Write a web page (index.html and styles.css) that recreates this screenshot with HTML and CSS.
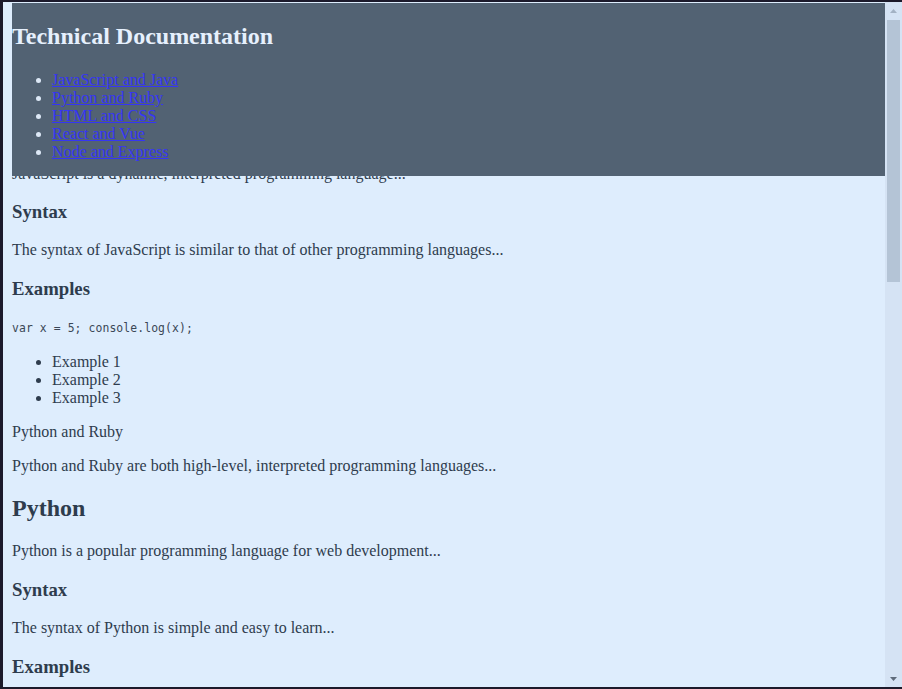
FILE: index.html
```html
<!DOCTYPE html>
<html lang="en">
<head>
<meta charset="utf-8">
<title>Technical Documentation</title>
<link rel="stylesheet" href="styles.css">
</head>
<body>
<div class="frame">
  <div class="viewport">
    <nav class="nav" id="navbar">
      <h2 class="nav-title">Technical Documentation</h2>
      <ul class="nav-list">
        <li class="nav-item"><a class="nav-link" href="#javascript">JavaScript and Java</a></li>
        <li class="nav-item"><a class="nav-link" href="#python">Python and Ruby</a></li>
        <li class="nav-item"><a class="nav-link" href="#html">HTML and CSS</a></li>
        <li class="nav-item"><a class="nav-link" href="#react">React and Vue</a></li>
        <li class="nav-item"><a class="nav-link" href="#node">Node and Express</a></li>
      </ul>
    </nav>
    <main class="content">
      <section class="doc-section" id="javascript">
        <p>JavaScript is a dynamic, interpreted programming language...</p>
        <h3>Syntax</h3>
        <p>The syntax of JavaScript is similar to that of other programming languages...</p>
        <h3>Examples</h3>
        <p><code class="code">var x = 5; console.log(x);</code></p>
        <ul>
          <li>Example 1</li>
          <li>Example 2</li>
          <li>Example 3</li>
        </ul>
      </section>
      <section class="doc-section" id="python">
        <p>Python and Ruby</p>
        <p>Python and Ruby are both high-level, interpreted programming languages...</p>
        <h2>Python</h2>
        <p>Python is a popular programming language for web development...</p>
        <h3>Syntax</h3>
        <p>The syntax of Python is simple and easy to learn...</p>
        <h3>Examples</h3>
      </section>
    </main>
  </div>
  <div class="scrollbar">
    <div class="sb-button">
      <svg width="7" height="4" viewBox="0 0 7 4"><polygon points="0,4 7,4 3.5,0" fill="#a3b2c4"/></svg>
    </div>
    <div class="sb-thumb"></div>
    <div class="sb-track"></div>
    <div class="sb-button">
      <svg width="7" height="4" viewBox="0 0 7 4"><polygon points="0,0 7,0 3.5,4" fill="#5f6b7b"/></svg>
    </div>
  </div>
</div>
</body>
</html>
```

FILE: styles.css
```css
html, body {
  margin: 0;
  padding: 0;
}
body {
  background: #1c1a2b;
  height: 689px;
  overflow: hidden;
}
.frame {
  display: flex;
  margin: 2px 0 0 3px;
  height: 685px;
  background: #deedfd;
}
.viewport {
  flex: 1;
  position: relative;
  overflow: hidden;
  font-family: "Liberation Serif", "Times New Roman", serif;
  font-size: 16px;
  line-height: 18px;
  color: #2e3c4d;
}
.nav {
  position: absolute;
  top: 1px;
  left: 9px;
  right: 0;
  background: #526273;
  color: #e6f0fd;
  z-index: 2;
}
.nav-title {
  font-size: 24px;
  line-height: 27px;
  margin: 19.92px 0 21px 0;
}
.nav-list {
  margin: 0 0 15px 0;
  padding-left: 40px;
}
.nav-item {
  color: #dde8f6;
}
.nav-item::marker {
  color: #dde8f6;
}
.nav-link {
  color: #3535f5;
}
.content {
  padding: 146.5px 9px 0 9px;
}
.content h2 {
  font-size: 24px;
  line-height: 27px;
  margin: 19.92px 0;
}
.content h3 {
  font-size: 18.72px;
  line-height: 21.5px;
  margin: 18.72px 0;
}
.content p {
  margin: 16px 0;
}
.content ul {
  margin: 16px 0;
  padding-left: 40px;
}
.code {
  font-family: "DejaVu Sans Mono", "Liberation Mono", monospace;
  font-size: 11.4px;
  letter-spacing: 0.1px;
  color: #3a4756;
}
.scrollbar {
  width: 17px;
  display: flex;
  flex-direction: column;
  background: #d5e3f4;
}
.sb-button {
  height: 17px;
  display: flex;
  align-items: center;
  justify-content: center;
}
.sb-thumb {
  margin: 1px 2px 0 2px;
  height: 262px;
  background: #b4c4d6;
}
.sb-track {
  flex: 1;
}
```
